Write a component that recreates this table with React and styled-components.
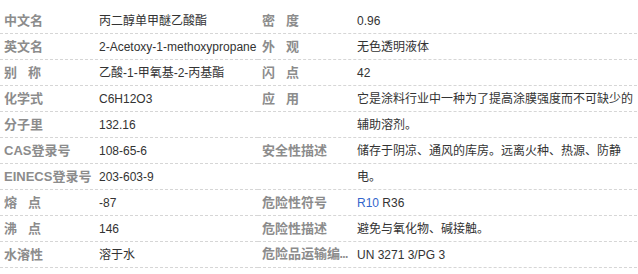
import React from 'react';
import styled, { createGlobalStyle } from 'styled-components';

const GlobalStyle = createGlobalStyle`
  body {
    margin: 0;
    background: #fff;
    font-family: "Liberation Sans", Arial, "Noto Sans CJK SC", sans-serif;
  }
`;

const List = styled.ul`
  list-style: none;
  margin: 0;
  padding: 8px 0 0 0;
  width: 637px;
  display: grid;
  grid-template-columns: 258px 379px;
`;

const Item = styled.li`
  height: 25px;
  line-height: 26px;
  border-bottom: 1px dashed #d6d6d6;
  padding-left: 4px;
  display: flex;
  align-items: flex-start;
  min-width: 0;
`;

// the long label gets clipped; a mono primary font keeps the ellipsis narrow
const Label = styled.span`
  flex: none;
  width: 90px;
  margin-right: 5px;
  font-family: ${(p) => (p.$clip
    ? '"Liberation Mono", "Noto Sans CJK SC", monospace'
    : '"Liberation Sans", "Noto Sans CJK SC", sans-serif')};
  font-size: 13px;
  font-weight: bold;
  color: #8c8c8c;
  white-space: nowrap;
  overflow: hidden;
  text-overflow: ellipsis;
  letter-spacing: ${(p) => (p.$spread ? '11px' : '0')};
`;

const Value = styled.span`
  flex: 1;
  min-width: 0;
  font-size: 12px;
  color: #333;
  line-height: 26px;
`;

const Link = styled.a`
  color: #3366cc;
  text-decoration: none;
`;

const left = [
  { label: '中文名', value: '丙二醇单甲醚乙酸酯' },
  { label: '英文名', value: '2-Acetoxy-1-methoxypropane' },
  { label: '别称', spread: true, value: '乙酸-1-甲氧基-2-丙基酯' },
  { label: '化学式', value: 'C6H12O3' },
  { label: '分子里', value: '132.16' },
  { label: 'CAS登录号', value: '108-65-6' },
  { label: 'EINECS登录号', value: '203-603-9' },
  { label: '熔点', spread: true, value: '-87' },
  { label: '沸点', spread: true, value: '146' },
  { label: '水溶性', value: '溶于水' },
];

const right = [
  { label: '密度', spread: true, value: '0.96' },
  { label: '外观', spread: true, value: '无色透明液体' },
  { label: '闪点', spread: true, value: '42' },
  { label: '应用', spread: true, value: '它是涂料行业中一种为了提高涂膜强度而不可缺少的辅助溶剂。' },
  null,
  { label: '安全性描述', value: '储存于阴凉、通风的库房。远离火种、热源、防静电。' },
  null,
  { label: '危险性符号', value: <><Link href="#">R10</Link> R36</> },
  { label: '危险性描述', value: '避免与氧化物、碱接触。' },
  { label: '危险品运输编号', clip: true, value: 'UN 3271 3/PG 3' },
];

function Row({ item }) {
  if (!item) return <Item />;
  return (
    <Item>
      <Label $spread={item.spread} $clip={item.clip}>{item.label}</Label>
      <Value>{item.value}</Value>
    </Item>
  );
}

export default function App() {
  return (
    <>
      <GlobalStyle />
      <List>
        {left.map((item, i) => (
          <React.Fragment key={i.toString()}>
            <Row item={item} />
            <Row item={right[i]} />
          </React.Fragment>
        ))}
      </List>
    </>
  );
}
